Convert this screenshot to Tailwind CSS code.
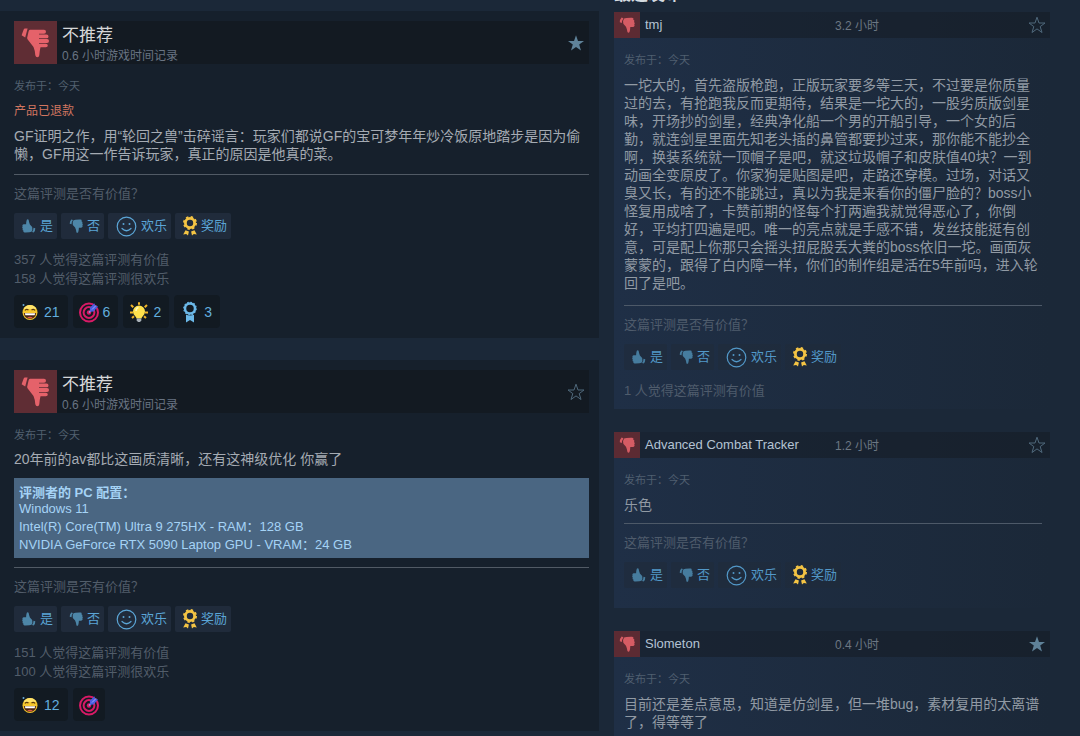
<!DOCTYPE html>
<html lang="zh-CN">
<head>
  <meta charset="UTF-8" />
  <meta name="viewport" content="width=device-width, initial-scale=1.0"/>
  <title>用户评测</title>
  <script src="https://cdn.jsdelivr.net/npm/@tailwindcss/browser@4"></script>
</head>
<body class="bg-[#1b2838] font-['Liberation_Sans','Noto_Sans_CJK_SC',sans-serif] h-screen overflow-hidden">

  <!-- Icons -->
  <svg class="hidden">
    <symbol id="thumb" viewBox="0 0 43 43">
      <path fill="currentColor" d="M11 7.5h2.600l-2.400 9-3.600-2.200 2-5.600q.4-1.200 1.400-1.200z"/>
      <path fill="currentColor" d="M16 8.800h14q2 0 2 2t-2 2h-5v.8h7.500q2 0 2 1.800t-2 1.900H25v.8h8q2 0 2 1.900t-2 1.900h-8v.8h6.800q2 0 2 1.700t-2 1.800H26.500q-.8 3-1.200 8-.2 2-2 2-1.500 0-2-2-.3-5-1.800-8.300l-6-7.700q-.8-1 0-3l1-4.500q.4-1.900 1.500-1.900z"/>
    </symbol>
    <symbol id="thumb-small" viewBox="0 0 14 14">
      <path fill="currentColor" d="M2.300.5 3.900 1Q2.500 3 2.500 5.300L.7 4.700Q.6 2.200 2.300.5z"/>
      <path fill="currentColor" d="M4.500 1.300Q6 .5 11.500.6q1.300.1 1.200 1.200l-.3.500q1.100.3 1.100 1.300l-.4.700q.8.400.7 1.400l-.5.600q.5.500.3 1.300-.3 1.100-1.500 1.100H9.900q-.1 2.700-.7 4.500-.3.600-.9.600t-.9-.6Q7 10.500 6.100 8.600L3.800 5.900Q3.100 3 4.500 1.300z"/>
    </symbol>
    <symbol id="smile" viewBox="0 0 21 21">
      <g fill="none" stroke="currentColor" stroke-width="1.200"><circle cx="10.500" cy="10.500" r="9.300"/><path d="M6 12.500q4.500 4.500 9 0" stroke-linecap="round"/></g>
      <circle cx="7.500" cy="8" r="1" fill="currentColor"/><circle cx="13.500" cy="8" r="1" fill="currentColor"/>
    </symbol>
    <symbol id="award" viewBox="0 0 14 20">
      <circle cx="7" cy="7" r="4.600" fill="none" stroke="#f4c444" stroke-width="2.800"/>
      <circle cx="7" cy="7" r="6.100" fill="none" stroke="#f4c444" stroke-width="1.800" stroke-dasharray="2.400 2.390"/>
      <path fill="#f4c444" d="M2.500 14.300 5.900 15.500 5 19.500 3.200 18 .2 18.600zM11.500 14.300 8.100 15.500 9 19.500 10.800 18l3 .6z"/>
    </symbol>
    <symbol id="star" viewBox="0 0 18 18">
      <path d="M9 1.200 11 7h6l-4.800 3.600 1.800 5.900L9 12.900l-5 3.600 1.800-5.900L1 7h6z"/>
    </symbol>
    <symbol id="laugh" viewBox="0 0 22 22">
      <circle cx="11" cy="11.500" r="7.500" fill="#f5c62c"/>
      <path d="M4.500 8q2-4 6.500-4t6.500 4" fill="#ffe36a"/>
      <path d="M6 9.500q1.500-2 3.500-.5M12.500 9q2-1.500 3.500.5" fill="none" stroke="#5b3a10" stroke-width="1.200"/>
      <path d="M4.800 12h12.400q-.7 5.800-6.200 5.800T4.800 12z" fill="#4a2412"/>
      <path d="M5.800 12.200h10.400l-.6 2H6.400z" fill="#fff"/>
      <path d="M8 16.500q3-1.500 6 0-3 1.500-6 0z" fill="#e25b4a"/>
      <circle cx="4.500" cy="4" r="1" fill="#69a9d6"/>
    </symbol>
    <symbol id="target" viewBox="0 0 22 22">
      <g fill="none" stroke="#d81a66" stroke-width="2"><circle cx="11" cy="11.500" r="9"/><circle cx="11" cy="11.500" r="5.400"/></g>
      <circle cx="11" cy="11.500" r="2.200" fill="#d81a66"/>
      <path d="m11 11.500 5-5" stroke="#8b9cf4" stroke-width="1.500"/>
      <path d="m12 10.800-.2-4 4.500-4.500.9 2.400 2.900.9-4.500 4.800z" fill="#4a5de0"/>
      <path d="m14 8.500 4-4" stroke="#9ea9ff" stroke-width="1"/>
    </symbol>
    <symbol id="bulb" viewBox="0 0 22 22">
      <path d="M11 1.200v2.500M3 4l2.300 2.300M19 4l-2.300 2.300M2 11.500h3M20 11.500h-3M4 17l2-1.800M18 17l-2-1.800" stroke="#f0b429" stroke-width="2"/>
      <path d="M11 4.500a6 6 0 0 1 6 6q0 3-2.200 4.700-1 .8-1.300 2.300h-5q-.3-1.500-1.300-2.300Q5 13.500 5 10.500a6 6 0 0 1 6-6z" fill="#ffe14d"/>
      <path d="M8 10q0-3 2.500-3.500" stroke="#fff7b8" stroke-width="1.500" fill="none"/>
      <path d="M8.700 17.500h4.600v2L12 21h-2l-1.300-1.500z" fill="#a9b1b8"/>
    </symbol>
    <symbol id="ribbon" viewBox="0 0 22 22">
      <circle cx="11" cy="7.500" r="5" fill="none" stroke="#6bb8e8" stroke-width="2.500"/>
      <circle cx="11" cy="7.500" r="6.200" fill="none" stroke="#6bb8e8" stroke-width="1.200" stroke-dasharray="1.600 1.600"/>
      <path d="M7 13.800q4 1.500 8 0V21.500l-4-2.500-4 2.500z" fill="#6bb8e8"/>
    </symbol>
  </svg>

  <main class="grid grid-cols-[599fr_466fr] gap-[15px] items-start">

    <!-- Helpful reviews -->
    <div class="pt-[11px] flex flex-col gap-[22px]">
      <article class="bg-[#16202c] pt-[10px] pb-[10px] pl-[14px] pr-[10px]">
        <header class="flex items-center bg-[#131a22] h-[43px]">
          <div class="size-[43px] bg-[#5f2d34] text-[#e5626a]"><svg class="size-full"><use href="#thumb"/></svg></div>
          <div class="ml-[5px] pt-[2px] flex-1">
            <h3 class="text-[17px] leading-6 text-[#d6d7d8]">不推荐</h3>
            <p class="text-xs leading-4 text-[#697483]">0.6 小时游戏时间记录</p>
          </div>
          <button aria-label="收藏" class="mr-1 text-[#5f8299]"><svg class="size-[18px] fill-current"><use href="#star"/></svg></button>
        </header>
        <p class="mt-[14px] text-[11px] leading-4 text-[#526070]">发布于：今天</p>
        <p class="mt-[9px] text-xs leading-4 text-[#d27660]">产品已退款</p>
        <p class="mt-2 text-sm leading-[18px] text-[#a5abb3]">GF证明之作，用“轮回之兽”击碎谣言：玩家们都说GF的宝可梦年年炒冷饭原地踏步是因为偷懒，GF用这一作告诉玩家，真正的原因是他真的菜。</p>
        <hr class="mt-[11px] border-[#515a65]"/>
        <p class="mt-[10px] text-[13px] leading-[18px] text-[#525d6a]">这篇评测是否有价值？</p>
        <div class="mt-[10px] flex gap-1 text-[13px] text-[#5ba5d6]">
          <button class="h-[26px] flex items-center gap-1 pl-2 pr-1 rounded-xs bg-[#202b3b]"><svg class="size-[14px] rotate-180 text-[#4d86a8]"><use href="#thumb-small"/></svg>是</button>
          <button class="h-[26px] flex items-center gap-1 pl-2 pr-1 rounded-xs bg-[#202b3b]"><svg class="size-[14px] text-[#4d86a8]"><use href="#thumb-small"/></svg>否</button>
          <button class="h-[26px] flex items-center gap-1 pl-2 pr-1 rounded-xs bg-[#202b3b]"><svg class="size-[21px]"><use href="#smile"/></svg>欢乐</button>
          <button class="h-[26px] flex items-center gap-1 pl-2 pr-1 rounded-xs bg-[#202b3b]"><svg class="w-[14px] h-5"><use href="#award"/></svg>奖励</button>
        </div>
        <p class="mt-[11px] text-[13px] leading-[19px] text-[#525d6a]">357 人觉得这篇评测有价值<br/>158 人觉得这篇评测很欢乐</p>
        <div class="mt-[7px] flex gap-[5px] text-sm text-[#62aede]">
          <button class="h-[33px] flex items-center px-[5px] rounded bg-[#121a22]"><svg class="size-[22px]"><use href="#laugh"/></svg><span class="px-[3px]">21</span></button>
          <button class="h-[33px] flex items-center px-[5px] rounded bg-[#121a22]"><svg class="size-[22px]"><use href="#target"/></svg><span class="px-[3px]">6</span></button>
          <button class="h-[33px] flex items-center px-[5px] rounded bg-[#121a22]"><svg class="size-[22px]"><use href="#bulb"/></svg><span class="px-[3px]">2</span></button>
          <button class="h-[33px] flex items-center px-[5px] rounded bg-[#121a22]"><svg class="size-[22px]"><use href="#ribbon"/></svg><span class="px-[3px]">3</span></button>
        </div>
      </article>

      <article class="bg-[#16202c] pt-[10px] pb-[10px] pl-[14px] pr-[10px]">
        <header class="flex items-center bg-[#131a22] h-[43px]">
          <div class="size-[43px] bg-[#5f2d34] text-[#e5626a]"><svg class="size-full"><use href="#thumb"/></svg></div>
          <div class="ml-[5px] pt-[2px] flex-1">
            <h3 class="text-[17px] leading-6 text-[#d6d7d8]">不推荐</h3>
            <p class="text-xs leading-4 text-[#697483]">0.6 小时游戏时间记录</p>
          </div>
          <button aria-label="收藏" class="mr-1 text-[#4f687b]"><svg class="size-[18px] fill-none stroke-current"><use href="#star"/></svg></button>
        </header>
        <p class="mt-[14px] text-[11px] leading-4 text-[#526070]">发布于：今天</p>
        <p class="mt-[7px] text-sm leading-[18px] text-[#a5abb3]">20年前的av都比这画质清晰，还有这神级优化 你赢了</p>
        <div class="mt-[10px] pt-2 pb-1 px-[5px] bg-[#4a6682] text-[13px] leading-[18px] text-[#a5d3f6]">
          <h4 class="font-bold leading-[14px]">评测者的 PC 配置：</h4>
          <p>Windows 11</p>
          <p>Intel(R) Core(TM) Ultra 9 275HX - RAM：128 GB</p>
          <p>NVIDIA GeForce RTX 5090 Laptop GPU - VRAM：24 GB</p>
        </div>
        <hr class="mt-[9px] border-[#515a65]"/>
        <p class="mt-[10px] text-[13px] leading-[18px] text-[#525d6a]">这篇评测是否有价值？</p>
        <div class="mt-[10px] flex gap-1 text-[13px] text-[#5ba5d6]">
          <button class="h-[26px] flex items-center gap-1 pl-2 pr-1 rounded-xs bg-[#202b3b]"><svg class="size-[14px] rotate-180 text-[#4d86a8]"><use href="#thumb-small"/></svg>是</button>
          <button class="h-[26px] flex items-center gap-1 pl-2 pr-1 rounded-xs bg-[#202b3b]"><svg class="size-[14px] text-[#4d86a8]"><use href="#thumb-small"/></svg>否</button>
          <button class="h-[26px] flex items-center gap-1 pl-2 pr-1 rounded-xs bg-[#202b3b]"><svg class="size-[21px]"><use href="#smile"/></svg>欢乐</button>
          <button class="h-[26px] flex items-center gap-1 pl-2 pr-1 rounded-xs bg-[#202b3b]"><svg class="w-[14px] h-5"><use href="#award"/></svg>奖励</button>
        </div>
        <p class="mt-[11px] text-[13px] leading-[19px] text-[#525d6a]">151 人觉得这篇评测有价值<br/>100 人觉得这篇评测很欢乐</p>
        <div class="mt-[7px] flex gap-[5px] text-sm text-[#62aede]">
          <button class="h-[33px] flex items-center px-[5px] rounded bg-[#121a22]"><svg class="size-[22px]"><use href="#laugh"/></svg><span class="px-[3px]">12</span></button>
          <button aria-label="奖励" class="h-[33px] flex items-center px-[5px] rounded bg-[#121a22]"><svg class="size-[22px]"><use href="#target"/></svg></button>
        </div>
      </article>
    </div>

    <!-- Recent reviews -->
    <div class="pr-[30px]">
      <h2 class="-mt-[15px] mb-[7px] text-[17px] leading-5 font-bold text-[#d5dbe0]">最近发布</h2>

      <div class="flex flex-col gap-[23px]">
        <article class="bg-linear-to-r from-[#1f2f46] to-[#1b2838]">
          <header class="flex items-center h-[26px] bg-[#131a22]/50">
            <div class="size-[26px] bg-[#5c2b33] text-[#d65c64] p-[5px]"><svg class="size-full"><use href="#thumb-small"/></svg></div>
            <a href="#" class="ml-[5px] w-[190px] text-[13px] leading-4 text-[#b4c3d3]">tmj</a>
            <span class="flex-1 pt-px text-xs text-[#6c7783]">3.2 小时</span>
            <button aria-label="收藏" class="mr-1 text-[#4f687b]"><svg class="size-[18px] fill-none stroke-current"><use href="#star"/></svg></button>
          </header>
          <div class="pt-[14px] pb-[9px] pl-[10px] pr-2">
            <p class="text-[11px] leading-4 text-[#505f70]">发布于：今天</p>
            <p class="mt-2 text-sm leading-[18px] text-[#919aa4]">一坨大的，首先盗版枪跑，正版玩家要多等三天，不过要是你质量过的去，有抢跑我反而更期待，结果是一坨大的，一股劣质版剑星味，开场抄的剑星，经典净化船一个男的开船引导，一个女的后勤，就连剑星里面先知老头插的鼻管都要抄过来，那你能不能抄全啊，换装系统就一顶帽子是吧，就这垃圾帽子和皮肤值40块？一到动画全变原皮了。你家狗是贴图是吧，走路还穿模。过场，对话又臭又长，有的还不能跳过，真以为我是来看你的僵尸脸的？boss小怪复用成啥了，卡赞前期的怪每个打两遍我就觉得恶心了，你倒好，平均打四遍是吧。唯一的亮点就是手感不错，发丝技能挺有创意，可是配上你那只会摇头扭屁股丢大粪的boss依旧一坨。画面灰蒙蒙的，跟得了白内障一样，你们的制作组是活在5年前吗，进入轮回了是吧。</p>
            <hr class="mt-[13px] border-[#4d5968]"/>
            <p class="mt-[10px] text-[13px] leading-[18px] text-[#4f5c6c]">这篇评测是否有价值？</p>
            <div class="mt-[10px] flex gap-1 text-[13px] text-[#5298c8]">
              <button class="h-[26px] flex items-center gap-1 pl-2 pr-1 rounded-xs bg-[#202b3b]/60"><svg class="size-[14px] rotate-180 text-[#467c9e]"><use href="#thumb-small"/></svg>是</button>
              <button class="h-[26px] flex items-center gap-1 pl-2 pr-1 rounded-xs bg-[#202b3b]/60"><svg class="size-[14px] text-[#467c9e]"><use href="#thumb-small"/></svg>否</button>
              <button class="h-[26px] flex items-center gap-1 pl-2 pr-1 rounded-xs bg-[#202b3b]/60"><svg class="size-[21px]"><use href="#smile"/></svg>欢乐</button>
              <button class="h-[26px] flex items-center gap-1 pl-2 pr-1 rounded-xs bg-[#202b3b]/60"><svg class="w-[14px] h-5"><use href="#award"/></svg>奖励</button>
            </div>
            <p class="mt-[11px] text-[13px] leading-[19px] text-[#4f5c6c]">1 人觉得这篇评测有价值</p>
          </div>
        </article>

        <article class="bg-linear-to-r from-[#1f2f46] to-[#1b2838]">
          <header class="flex items-center h-[26px] bg-[#131a22]/50">
            <div class="size-[26px] bg-[#5c2b33] text-[#d65c64] p-[5px]"><svg class="size-full"><use href="#thumb-small"/></svg></div>
            <a href="#" class="ml-[5px] w-[190px] text-[13px] leading-4 text-[#b4c3d3]">Advanced Combat Tracker</a>
            <span class="flex-1 pt-px text-xs text-[#6c7783]">1.2 小时</span>
            <button aria-label="收藏" class="mr-1 text-[#4f687b]"><svg class="size-[18px] fill-none stroke-current"><use href="#star"/></svg></button>
          </header>
          <div class="pt-[14px] pb-5 pl-[10px] pr-2">
            <p class="text-[11px] leading-4 text-[#505f70]">发布于：今天</p>
            <p class="mt-2 text-sm leading-[18px] text-[#919aa4]">乐色</p>
            <hr class="mt-[9px] border-[#4d5968]"/>
            <p class="mt-[10px] text-[13px] leading-[18px] text-[#4f5c6c]">这篇评测是否有价值？</p>
            <div class="mt-[10px] flex gap-1 text-[13px] text-[#5298c8]">
              <button class="h-[26px] flex items-center gap-1 pl-2 pr-1 rounded-xs bg-[#202b3b]/60"><svg class="size-[14px] rotate-180 text-[#467c9e]"><use href="#thumb-small"/></svg>是</button>
              <button class="h-[26px] flex items-center gap-1 pl-2 pr-1 rounded-xs bg-[#202b3b]/60"><svg class="size-[14px] text-[#467c9e]"><use href="#thumb-small"/></svg>否</button>
              <button class="h-[26px] flex items-center gap-1 pl-2 pr-1 rounded-xs bg-[#202b3b]/60"><svg class="size-[21px]"><use href="#smile"/></svg>欢乐</button>
              <button class="h-[26px] flex items-center gap-1 pl-2 pr-1 rounded-xs bg-[#202b3b]/60"><svg class="w-[14px] h-5"><use href="#award"/></svg>奖励</button>
            </div>
          </div>
        </article>

        <article class="bg-linear-to-r from-[#1f2f46] to-[#1b2838]">
          <header class="flex items-center h-[26px] bg-[#131a22]/50">
            <div class="size-[26px] bg-[#5c2b33] text-[#d65c64] p-[5px]"><svg class="size-full"><use href="#thumb-small"/></svg></div>
            <a href="#" class="ml-[5px] w-[190px] text-[13px] leading-4 text-[#b4c3d3]">Slometon</a>
            <span class="flex-1 pt-px text-xs text-[#6c7783]">0.4 小时</span>
            <button aria-label="收藏" class="mr-1 text-[#5f8299]"><svg class="size-[18px] fill-current"><use href="#star"/></svg></button>
          </header>
          <div class="pt-[14px] pb-5 pl-[10px] pr-2">
            <p class="text-[11px] leading-4 text-[#505f70]">发布于：今天</p>
            <p class="mt-2 text-sm leading-[18px] text-[#919aa4]">目前还是差点意思，知道是仿剑星，但一堆bug，素材复用的太离谱了，得等等了</p>
          </div>
        </article>
      </div>
    </div>
  </main>
</body>
</html>
